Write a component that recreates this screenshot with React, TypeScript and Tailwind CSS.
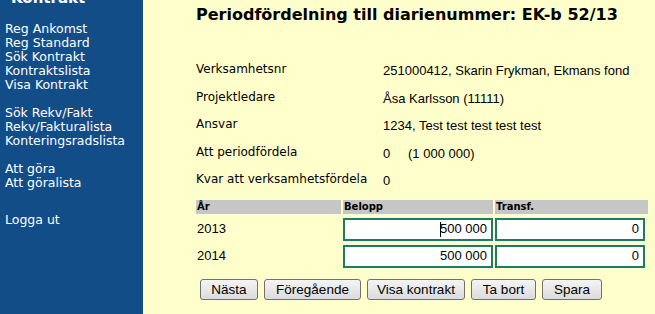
const menu = [
  ['Reg Ankomst', 'Reg Standard', 'Sök Kontrakt', 'Kontraktslista', 'Visa Kontrakt'],
  ['Sök Rekv/Fakt', 'Rekv/Fakturalista', 'Konteringsradslista'],
  ['Att göra', 'Att göralista'],
];

const info = [
  { label: 'Verksamhetsnr', value: '251000412, Skarin Frykman, Ekmans fond' },
  { label: 'Projektledare', value: 'Åsa Karlsson (11111)' },
  { label: 'Ansvar', value: '1234, Test test test test test' },
  { label: 'Att periodfördela', value: null },
  { label: 'Kvar att verksamhetsfördela', value: '0' },
];

const rows = [
  { year: '2013', belopp: '500 000', transf: '0', focused: true },
  { year: '2014', belopp: '500 000', transf: '0', focused: false },
];

const buttons = [
  { text: 'Nästa', w: 'w-[58px]' },
  { text: 'Föregående', w: 'w-[97px]' },
  { text: 'Visa kontrakt', w: 'w-[98px]' },
  { text: 'Ta bort', w: 'w-[65px]' },
  { text: 'Spara', w: 'w-[60px]' },
];

const verdana = "font-['DejaVu_Sans',Verdana,sans-serif]";
const arial = "font-['Liberation_Sans',Arial,sans-serif]";

export default function App() {
  return (
    <div className="flex h-[314px] w-[655px] overflow-hidden bg-[#ffffcc]">
      {/* Sidebar */}
      <div className={`w-[143px] shrink-0 bg-[#134d88] text-white ${verdana}`}>
        <div className="-mt-[11px] pl-[11px] text-[15px] font-bold leading-[18px]">Kontrakt</div>
        <div className="mt-[15px] pl-[5px] text-[12.5px] leading-[14px]">
          {menu.map((group, i) => (
            <div key={i} className="mb-[14px]">
              {group.map((item) => (
                <div key={item}>{item}</div>
              ))}
            </div>
          ))}
          <div className="mt-[23px]">Logga ut</div>
        </div>
      </div>

      {/* Main */}
      <div className="flex-1 pl-[53px] pt-[5px] text-black">
        <h1 className={`${verdana} text-[16px] font-bold leading-[20px]`}>
          Periodfördelning till diarienummer: EK-b 52/13
        </h1>

        <div className="mt-[36px] grid grid-cols-[187px_1fr]">
          {info.map((r) => (
            <div key={r.label} className="contents">
              <div className={`${verdana} h-[27.5px] text-[12px] leading-[16px]`}>{r.label}</div>
              <div className={`${arial} pt-[2px] text-[13px] leading-[16px]`}>
                {r.value ?? (
                  <span className="flex">
                    <span className="w-[25px]">0</span>
                    <span>(1 000 000)</span>
                  </span>
                )}
              </div>
            </div>
          ))}
        </div>

        <div className="mt-[1px] w-[452px]">
          <div className={`${verdana} grid h-[13px] grid-cols-[145px_150px_153px] gap-x-[2px] text-[10px] font-bold leading-[14px]`}>
            <div className="bg-[#c6c6c6] pl-[1px]">År</div>
            <div className="bg-[#c6c6c6] pl-[1px]">Belopp</div>
            <div className="bg-[#c6c6c6] pl-[1px]">Transf.</div>
          </div>
          {rows.map((r, i) => (
            <div
              key={r.year}
              className={`grid grid-cols-[145px_150px_150px] gap-x-[2px] ${i === 0 ? 'mt-[5px]' : 'mt-[4px]'} ${arial} text-[13px]`}
            >
              <div className="flex items-center pl-[1px]">{r.year}</div>
              <div className="flex h-[23px] items-center justify-end border-2 border-[#1f7a6b] bg-white pr-[4px]">
                {r.focused && <span className="mr-[-1px] h-[15px] w-[1px] bg-black" />}
                {r.belopp}
              </div>
              <div className="flex h-[23px] items-center justify-end border-2 border-[#1f7a6b] bg-white pr-[4px]">
                {r.transf}
              </div>
            </div>
          ))}
        </div>

        <div className="mt-[11px] flex gap-[6px] pl-[4px]">
          {buttons.map((b) => (
            <button
              key={b.text}
              className={`${b.w} ${arial} h-[21px] rounded-[3px] border border-[#707070] bg-gradient-to-b from-[#f4f4f4] to-[#dcdcdc] text-[13.5px] leading-[19px] text-black`}
            >
              {b.text}
            </button>
          ))}
        </div>
      </div>
    </div>
  );
}
